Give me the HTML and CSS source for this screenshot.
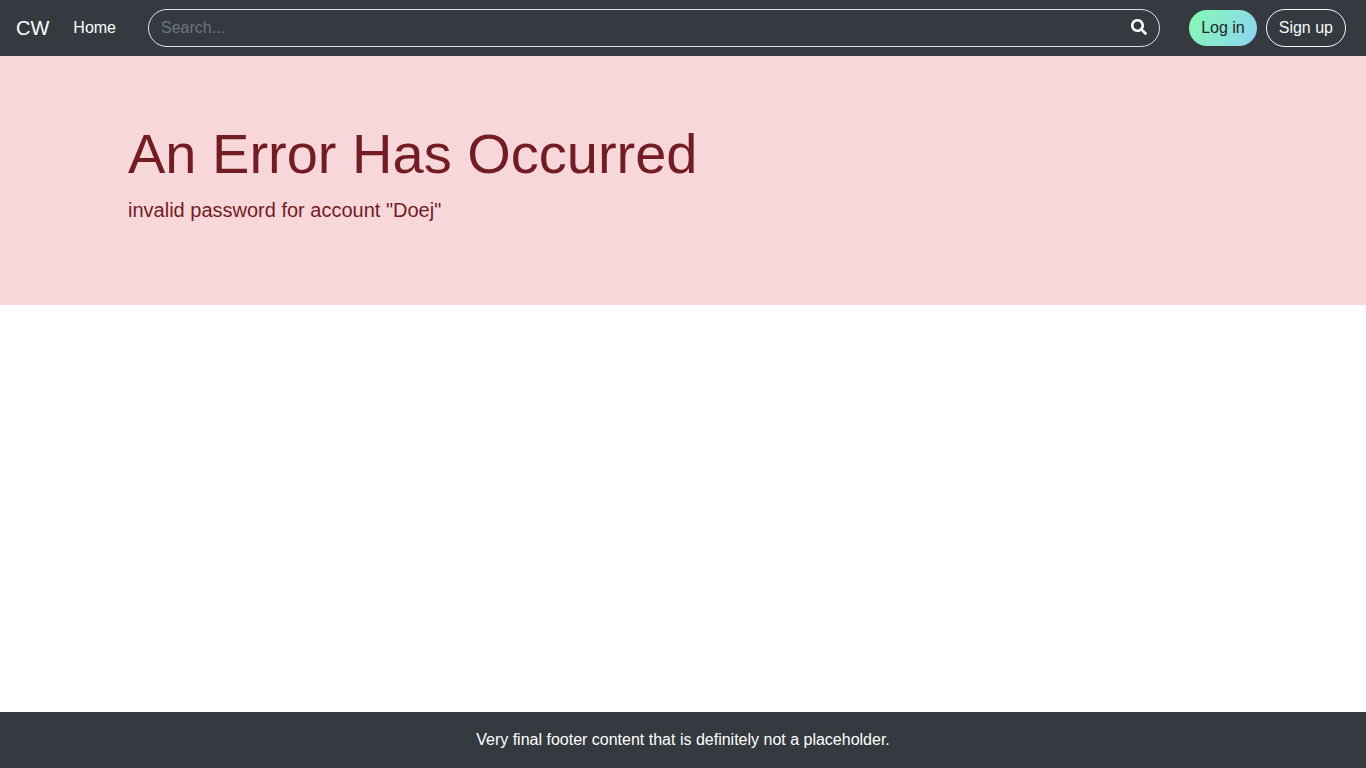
FILE: index.html
```html
<!DOCTYPE html>
<html lang="en">
<head>
<meta charset="utf-8">
<title>CW</title>
<link rel="stylesheet" href="styles.css">
</head>
<body>
<nav class="navbar">
  <a class="brand">CW</a>
  <a class="nav-link">Home</a>
  <form class="search">
    <input class="search-input" type="text" placeholder="Search...">
    <button class="search-button" type="button" aria-label="Search">
      <svg viewBox="0 0 512 512" width="16" height="16"><path fill="currentColor" d="M505 442.700L405.300 343c-4.500-4.500-10.600-7-17-7H372c27.600-35.300 44-79.700 44-128C416 93.100 322.900 0 208 0S0 93.100 0 208s93.100 208 208 208c48.300 0 92.700-16.400 128-44v16.300c0 6.400 2.500 12.500 7 17l99.700 99.700c9.400 9.400 24.600 9.400 33.900 0l28.300-28.300c9.400-9.400 9.400-24.600.1-34zM208 336c-70.700 0-128-57.200-128-128 0-70.700 57.200-128 128-128 70.700 0 128 57.200 128 128 0 70.700-57.200 128-128 128z"/></svg>
    </button>
  </form>
  <div class="actions">
    <a class="btn btn-login">Log in</a>
    <a class="btn btn-signup">Sign up</a>
  </div>
</nav>
<main class="main">
  <section class="alert">
    <h1 class="alert-title">An Error Has Occurred</h1>
    <p class="alert-text">invalid password for account "Doej"</p>
  </section>
</main>
<footer class="footer">Very final footer content that is definitely not a placeholder.</footer>
</body>
</html>
```
FILE: styles.css
```css
* { box-sizing: border-box; }
body {
  margin: 0;
  min-height: 100vh;
  display: flex;
  flex-direction: column;
  font: 16px/1.5 "Liberation Sans", Arial, sans-serif;
  color: #212529;
  background: #fff;
}
.navbar {
  display: flex;
  align-items: center;
  height: 56px;
  padding: 0 20px 0 16px;
  background: #343a40;
  color: #fff;
}
.brand { font-size: 20px; line-height: 30px; margin-right: 24px; }
.nav-link { margin-right: 32px; }
.search {
  flex: 1;
  display: flex;
  height: 38px;
  border: 1px solid #dee2e6;
  border-radius: 20px;
}
.search-input {
  flex: 1;
  min-width: 0;
  padding: 0 12px;
  border: 0;
  outline: 0;
  background: transparent;
  color: #fff;
  font: inherit;
}
.search-input::placeholder { color: #6c757d; opacity: 1; }
.search-button {
  display: flex;
  align-items: center;
  padding: 0 12px 2px;
  border: 0;
  background: transparent;
  color: #fff;
}
.search-button svg { display: block; }
.actions { display: flex; gap: 8px; margin-left: 28px; }
.btn {
  height: 38px;
  padding: 6px 12px;
  border: 1px solid transparent;
  border-radius: 20px;
  white-space: nowrap;
}
.btn-login {
  color: #212529;
  background: linear-gradient(120deg, #84fab0 0%, #8fd3f4 100%) padding-box;
}
.btn-signup { border-color: #f8f9fa; color: #f8f9fa; }
.main { flex: 1; }
.alert {
  height: 249px;
  padding: 64px 128px;
  background: #f8d7da;
  color: #721c24;
}
.alert-title {
  margin: 0 0 8px;
  font-size: 56px;
  font-weight: 400;
  line-height: 67px;
}
.alert-text { margin: 0; font-size: 20px; line-height: 30px; }
.footer {
  height: 56px;
  padding: 16px;
  background: #343a40;
  color: #fff;
  text-align: center;
}
```
